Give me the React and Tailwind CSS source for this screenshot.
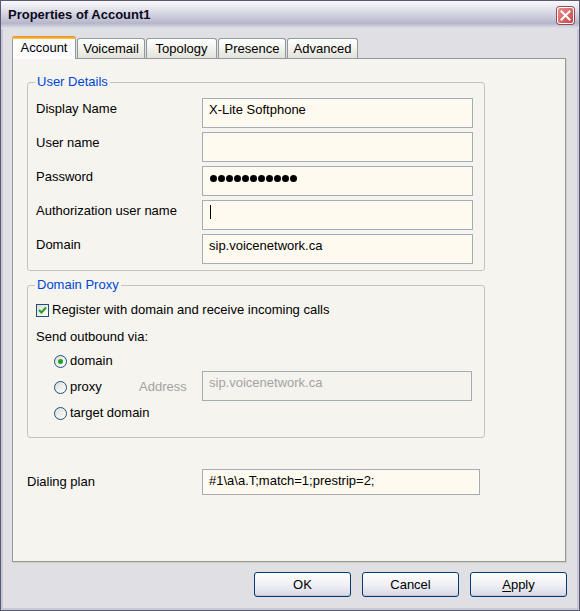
import React from 'react';

const font = { fontFamily: '"Liberation Sans", Arial, sans-serif' };

function Tab({ label, active, w }) {
  if (active) {
    return (
      <div
        className={`relative z-10 -mb-px flex h-[23px] items-start justify-center rounded-t-[3px] border-x border-[#919b9c] bg-[#fcfcfe] pt-[3px] ${w}`}
      >
        <div className="absolute -left-px -right-px top-0 h-[3px] rounded-t-[3px] bg-[linear-gradient(to_bottom,#e68b2c,#ffc73c)]" />
        <span className="mt-[1px] text-[13px] leading-[16px] text-black">{label}</span>
      </div>
    );
  }
  return (
    <div
      className={`flex h-[20px] items-center justify-center rounded-t-[3px] border border-b-0 border-[#919b9c] bg-[linear-gradient(to_bottom,#ffffff,#f0f0ea_60%,#e2e2da)] ${w}`}
    >
      <span className="text-[13px] leading-[16px] text-black">{label}</span>
    </div>
  );
}

function Field({ children, w = 'w-[271px]', h = 'h-[30px]', disabled }) {
  return (
    <div
      className={`${w} ${h} shrink-0 border border-[#a5acb5] pl-[6px] pt-[3px] text-[13px] leading-[16px] ${
        disabled ? 'bg-[#f4f3ee] text-[#a3a3a3]' : 'bg-[#fffaef] text-black'
      }`}
    >
      {children}
    </div>
  );
}

function Row({ label, children }) {
  return (
    <div className="flex items-start">
      <div className="w-[174px] pl-[8px] pt-[3px] text-[13px] leading-[16px] text-black">{label}</div>
      {children}
    </div>
  );
}

function Radio({ checked }) {
  return (
    <div className="flex h-[13px] w-[13px] items-center justify-center rounded-full border border-[#1c5180] bg-[linear-gradient(135deg,#dcdcd7,#ffffff)]">
      {checked && <div className="h-[5px] w-[5px] rounded-full bg-[#21a121]" />}
    </div>
  );
}

function Button({ children }) {
  return (
    <div className="flex h-[25px] w-[97px] items-center justify-center rounded-[3px] border border-[#003c74] bg-[linear-gradient(to_bottom,#ffffff,#f0f0f5_50%,#d8d8e4)] text-[13px] leading-[16px] text-black shadow-[inset_0_-1px_0_#c6c5d7]">
      {children}
    </div>
  );
}

export default function App() {
  return (
    <div style={font} className="flex h-[611px] w-[580px] flex-col border border-[#585872] bg-[#e0dfe3]">
      {/* Title bar */}
      <div className="flex h-[28px] shrink-0 items-center justify-between bg-[linear-gradient(to_bottom,#fafafc_0%,#dadae6_40%,#b6b6cb_80%,#e4e4ec_100%)] pl-[7px] pr-[5px]">
        <span className="text-[13px] font-bold leading-[16px] text-[#0a0a1a]">Properties of Account1</span>
        <div className="flex h-[17px] w-[17px] items-center justify-center rounded-[3px] border border-[#fff] bg-[linear-gradient(135deg,#e88f8f,#c8454a)] shadow-[0_0_0_1px_#9a4a4e]">
          <svg width="11" height="11" viewBox="0 0 11 11">
            <path d="M1.5 1.5 L9.5 9.5 M9.5 1.5 L1.5 9.5" stroke="#fff" strokeWidth="2" strokeLinecap="square" />
          </svg>
        </div>
      </div>

      {/* Body */}
      <div className="flex flex-1 flex-col border-x-2 border-b-2 border-[#c8c8d6] pl-[9px] pr-[7px] pt-[7px]">
        {/* Tabs */}
        <div className="flex items-end gap-px">
          <Tab label="Account" active w="w-[64px]" />
          <Tab label="Voicemail" w="w-[68px]" />
          <Tab label="Topology" w="w-[71px]" />
          <Tab label="Presence" w="w-[68px]" />
          <Tab label="Advanced" w="w-[71px]" />
        </div>

        {/* Tab panel */}
        <div className="flex h-[504px] w-[554px] flex-col border border-[#919b9c] bg-[#f5f4ef] pl-[14px] shadow-[1px_1px_0_#d0d0bf]">
          <fieldset className="mt-[15px] w-[458px] rounded-[3px] border border-[#c5c5bc] pb-[6px] pt-[8px]">
            <legend className="ml-[7px] px-[2px] text-[13px] leading-[16px] text-[#0046d5]">User Details</legend>
            <div className="flex flex-col gap-[4px]">
              <Row label="Display Name">
                <Field>X-Lite Softphone</Field>
              </Row>
              <Row label="User name">
                <Field />
              </Row>
              <Row label="Password">
                <Field>
                  <div className="flex h-[16px] items-center gap-[1px] pl-[1px]">
                    {Array.from({ length: 11 }).map((_, i) => (
                      <div key={i} className="h-[7px] w-[7px] rounded-full bg-black" />
                    ))}
                  </div>
                </Field>
              </Row>
              <Row label="Authorization user name">
                <Field>
                  <div className="ml-[1px] mt-[1px] h-[14px] w-px bg-black" />
                </Field>
              </Row>
              <Row label="Domain">
                <Field>sip.voicenetwork.ca</Field>
              </Row>
            </div>
          </fieldset>

          <fieldset className="mt-[6px] w-[458px] rounded-[3px] border border-[#c5c5bc] pb-[16px] pt-[9px]">
            <legend className="ml-[7px] px-[2px] text-[13px] leading-[16px] text-[#0046d5]">Domain Proxy</legend>
            <div className="flex h-[16px] items-center pl-[8px]">
              <div className="flex h-[13px] w-[13px] items-center justify-center border border-[#1c5180] bg-[linear-gradient(135deg,#dcdcd7,#ffffff)]">
                <svg width="9" height="9" viewBox="0 0 9 9">
                  <path d="M1 4 L3.5 6.5 L8 1.5" stroke="#21a121" strokeWidth="2" fill="none" />
                </svg>
              </div>
              <span className="ml-[3px] text-[13px] leading-[16px] text-black">
                Register with domain and receive incoming calls
              </span>
            </div>
            <div className="mt-[11px] pl-[8px] text-[13px] leading-[16px] text-black">Send outbound via:</div>
            <div className="mt-[8px] flex flex-col gap-[10px] pl-[26px]">
              <div className="flex h-[16px] items-center gap-[3px]">
                <Radio checked />
                <span className="text-[13px] leading-[16px] text-black">domain</span>
              </div>
              <div className="flex h-[16px] items-center">
                <div className="flex w-[85px] items-center gap-[3px]">
                  <Radio />
                  <span className="text-[13px] leading-[16px] text-black">proxy</span>
                </div>
                <span className="w-[63px] text-[13px] leading-[16px] text-[#a3a3a3]">Address</span>
                <div className="-mt-[3px]">
                  <Field disabled w="w-[270px]">sip.voicenetwork.ca</Field>
                </div>
              </div>
              <div className="flex h-[16px] items-center gap-[3px]">
                <Radio />
                <span className="text-[13px] leading-[16px] text-black">target domain</span>
              </div>
            </div>
          </fieldset>

          <div className="mt-[31px] flex items-center">
            <div className="w-[175px] text-[13px] leading-[16px] text-black">Dialing plan</div>
            <Field w="w-[278px]" h="h-[26px]">#1\a\a.T;match=1;prestrip=2;</Field>
          </div>
        </div>

        {/* Buttons */}
        <div className="mt-[10px] flex justify-end gap-[11px] pr-[3px]">
          <Button>OK</Button>
          <Button>Cancel</Button>
          <Button>
            <span>
              <span className="underline underline-offset-2">A</span>pply
            </span>
          </Button>
        </div>
      </div>
    </div>
  );
}
